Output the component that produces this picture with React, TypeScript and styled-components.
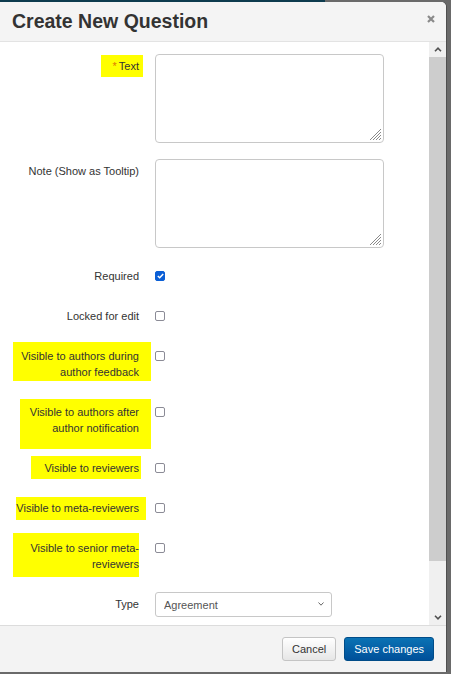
import { createGlobalStyle, styled } from "styled-components";

const GlobalStyle = createGlobalStyle`
  html, body {
    margin: 0;
    padding: 0;
    background: #6a6a6a;
  }
  body {
    width: 451px;
    height: 674px;
    overflow: hidden;
    font-family: "Liberation Sans", Arial, sans-serif;
  }
`;

const TopStrip = styled.div`
  width: 325px;
  height: 2px;
  background: #0d3b4e;
`;

const Modal = styled.div`
  width: 446px;
  height: 670px;
  background: #fff;
  border-top-right-radius: 5px;
  display: flex;
  flex-direction: column;
  overflow: hidden;
  box-shadow: 1px 0 0 #4f4f4f;
`;

const Header = styled.div`
  height: 40px;
  box-sizing: border-box;
  padding: 8px 11px 0 12px;
  background: #f4f4f4;
  border-bottom: 1px solid #e3e3e3;
  display: flex;
  justify-content: space-between;
  align-items: flex-start;
`;

const Title = styled.h4`
  margin: 0;
  font-size: 19.5px;
  line-height: 22px;
  font-weight: bold;
  color: #333;
`;

const CloseButton = styled.button`
  margin-top: 5px;
  padding: 0;
  border: 0;
  background: none;
  width: 8px;
  height: 8px;
  display: flex;
  cursor: pointer;
`;

const BodyWrap = styled.div`
  flex: 1;
  display: flex;
  min-height: 0;
`;

const Body = styled.div`
  flex: 1;
  overflow: hidden;
  padding: 12px 0 0 12px;
`;

const ScrollTrack = styled.div`
  width: 17px;
  background: #f0f0f0;
  display: flex;
  flex-direction: column;
`;

const ScrollArrow = styled.div`
  height: 15px;
  display: flex;
  align-items: center;
  justify-content: center;
`;

const ScrollThumb = styled.div`
  height: 504px;
  background: #cdcdcd;
`;

const ScrollRest = styled.div`
  flex: 1;
`;

const Row = styled.div<{ $after: number }>`
  display: grid;
  grid-template-columns: 127px 229px;
  column-gap: 16px;
  align-items: start;
  margin-bottom: ${(p) => p.$after}px;
`;

const Label = styled.div<{ $top?: number }>`
  display: flex;
  justify-content: flex-end;
  text-align: right;
  font-size: 11px;
  line-height: 16px;
  color: #333;
  padding-top: ${(p) => p.$top ?? 0}px;
`;

type Box = { t: number; r: number; b: number; l: number; w?: number };

const Mark = styled.span<{ $box: Box }>`
  display: block;
  background: #ffff00;
  text-align: right;
  ${(p) => (p.$box.w ? `width: ${p.$box.w}px; flex-shrink: 0;` : "")}
  padding: ${(p) => `${p.$box.t}px ${p.$box.r}px ${p.$box.b}px ${p.$box.l}px`};
  margin: ${(p) => `-${p.$box.t}px -${p.$box.r}px -${p.$box.b}px -${p.$box.l}px`};
`;

const Star = styled.span`
  color: #e07a00;
  margin-right: 2px;
`;

const AreaBox = styled.div`
  position: relative;
  width: 229px;
  height: 89px;
`;

const TextArea = styled.textarea`
  box-sizing: border-box;
  width: 100%;
  height: 100%;
  margin: 0;
  border: 1px solid #c8c8c8;
  border-radius: 4px;
  font-family: inherit;
  font-size: 11px;
  resize: none;
  outline: none;
  display: block;
`;

const Grip = styled.svg`
  position: absolute;
  right: 2px;
  bottom: 2px;
  pointer-events: none;
`;

const Check = styled.span<{ $checked?: boolean }>`
  box-sizing: border-box;
  width: 10px;
  height: 10px;
  margin-top: 3px;
  border-radius: 2px;
  border: 1px solid ${(p) => (p.$checked ? "#0b5fd6" : "#8b8b96")};
  background: ${(p) => (p.$checked ? "#0b5fd6" : "#fff")};
  display: flex;
  align-items: center;
  justify-content: center;
`;

const SelectBox = styled.div`
  position: relative;
  width: 177px;
  height: 25px;
`;

const Select = styled.select`
  box-sizing: border-box;
  width: 100%;
  height: 100%;
  appearance: none;
  border: 1px solid #c8c8c8;
  border-radius: 3px;
  background: #fff;
  padding: 0 20px 0 8px;
  font-family: inherit;
  font-size: 11px;
  color: #555;
  outline: none;
`;

const SelectChevron = styled.svg`
  position: absolute;
  right: 8px;
  top: 10px;
  pointer-events: none;
`;

const Footer = styled.div`
  height: 47px;
  box-sizing: border-box;
  border-top: 1px solid #dcdcdc;
  background: #f3f3f3;
  padding: 11px 12px 0 0;
  display: flex;
  justify-content: flex-end;
  gap: 8px;
`;

const Button = styled.button<{ $primary?: boolean }>`
  height: 24px;
  padding: 0 9px;
  border-radius: 3px;
  font-family: inherit;
  font-size: 11px;
  cursor: pointer;
  color: ${(p) => (p.$primary ? "#fff" : "#333")};
  border: 1px solid ${(p) => (p.$primary ? "#004c88" : "#c4c4c4")};
  background: ${(p) =>
    p.$primary
      ? "linear-gradient(#0a72b4, #00509a)"
      : "linear-gradient(#ffffff, #e6e6e6)"};
`;

const flags: { text: string; checked?: boolean; box?: Box; after: number }[] = [
  { text: "Required", checked: true, after: 24 },
  { text: "Locked for edit", after: 24 },
  {
    text: "Visible to authors during author feedback",
    box: { t: 6, r: 12, b: 1, l: 0, w: 126 },
    after: 24,
  },
  {
    text: "Visible to authors after author notification",
    box: { t: 5, r: 12, b: 13, l: 0, w: 119 },
    after: 24,
  },
  { text: "Visible to reviewers", box: { t: 4, r: 2, b: 3, l: 13 }, after: 24 },
  { text: "Visible to meta-reviewers", box: { t: 3, r: 7, b: 4, l: 0 }, after: 24 },
  {
    text: "Visible to senior meta-reviewers",
    box: { t: 7, r: 0, b: 5, l: 0, w: 126 },
    after: 20,
  },
];

const Chevron = ({ up }: { up?: boolean }) => (
  <svg width="8" height="5" viewBox="0 0 8 5">
    <polyline
      points={up ? "1,4.2 4,1.2 7,4.2" : "1,0.8 4,3.8 7,0.8"}
      fill="none"
      stroke="#505050"
      strokeWidth="1.6"
    />
  </svg>
);

const Area = () => (
  <AreaBox>
    <TextArea />
    <Grip width="13" height="13" viewBox="0 0 13 13">
      <path
        d="M12 1L1 12M12 4L4 12M12 7L7 12M12 10L10 12"
        stroke="#8a8a8a"
        strokeWidth="1"
      />
    </Grip>
  </AreaBox>
);

const App = () => {
  return (
    <>
      <GlobalStyle />
      <TopStrip />
      <Modal>
        <Header>
          <Title>Create New Question</Title>
          <CloseButton aria-label="Close">
            <svg width="8" height="8" viewBox="0 0 8 8">
              <path d="M1 1L7 7M7 1L1 7" stroke="#8a8a8a" strokeWidth="2.2" />
            </svg>
          </CloseButton>
        </Header>
        <BodyWrap>
          <Body>
            <Row $after={16}>
              <Label $top={4}>
                <Mark $box={{ t: 3, r: 4, b: 3, l: 12 }}>
                  <Star>*</Star>Text
                </Mark>
              </Label>
              <Area />
            </Row>
            <Row $after={20}>
              <Label $top={4}>Note (Show as Tooltip)</Label>
              <Area />
            </Row>
            {flags.map((f) => (
              <Row key={f.text} $after={f.after}>
                <Label>{f.box ? <Mark $box={f.box}>{f.text}</Mark> : f.text}</Label>
                <Check $checked={f.checked}>
                  {f.checked && (
                    <svg width="7" height="6" viewBox="0 0 7 6">
                      <polyline
                        points="0.8,3 2.7,4.8 6.2,1"
                        fill="none"
                        stroke="#fff"
                        strokeWidth="1.5"
                      />
                    </svg>
                  )}
                </Check>
              </Row>
            ))}
            <Row $after={40}>
              <Label $top={4}>Type</Label>
              <SelectBox>
                <Select defaultValue="Agreement">
                  <option>Agreement</option>
                </Select>
                <SelectChevron width="6" height="4" viewBox="0 0 6 4">
                  <polyline points="0.5,0.5 3,3.2 5.5,0.5" fill="none" stroke="#666" strokeWidth="1" />
                </SelectChevron>
              </SelectBox>
            </Row>
          </Body>
          <ScrollTrack>
            <ScrollArrow>
              <Chevron up />
            </ScrollArrow>
            <ScrollThumb />
            <ScrollRest />
            <ScrollArrow>
              <Chevron />
            </ScrollArrow>
          </ScrollTrack>
        </BodyWrap>
        <Footer>
          <Button>Cancel</Button>
          <Button $primary>Save changes</Button>
        </Footer>
      </Modal>
    </>
  );
};

export default App;
